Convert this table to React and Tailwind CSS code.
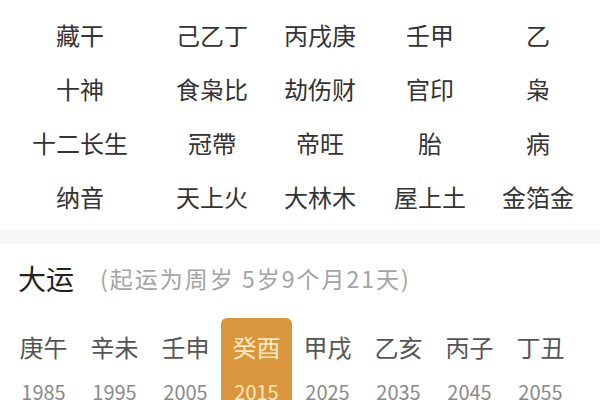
const rows = [
  ["藏干", "己乙丁", "丙戌庚", "壬甲", "乙"],
  ["十神", "食枭比", "劫伤财", "官印", "枭"],
  ["十二长生", "冠帶", "帝旺", "胎", "病"],
  ["纳音", "天上火", "大林木", "屋上土", "金箔金"],
];

const yun = [
  ["庚午", "1985"],
  ["辛未", "1995"],
  ["壬申", "2005"],
  ["癸酉", "2015"],
  ["甲戌", "2025"],
  ["乙亥", "2035"],
  ["丙子", "2045"],
  ["丁丑", "2055"],
];

export default function App() {
  return (
    <div
      className="w-[600px] h-[400px] overflow-hidden bg-white"
      style={{ fontFamily: '"Noto Sans CJK SC", "Noto Sans", sans-serif' }}
    >
      <div className="grid grid-cols-[160px_104px_112px_108px_108px] pt-[8px] pb-[6px] text-[#333]">
        {rows.map((r) =>
          r.map((c, i) => (
            <div key={r[0] + i} className="h-[54px] flex items-center justify-center text-[24px] leading-none">
              {c}
            </div>
          ))
        )}
      </div>
      <div className="h-[14px] bg-[#f7f7f7]" />
      <div className="flex items-center pl-[18px] pt-[20px]">
        <span className="text-[28px] leading-none text-[#222]">大运</span>
        <span className="ml-[26px] text-[23px] tracking-[2px] leading-none text-[#a3a3a3]">(起运为周岁 5岁9个月21天)</span>
      </div>
      <div className="flex pl-[8px] mt-[26px]">
        {yun.map(([g, y]) => {
          const on = g === "癸酉";
          return (
            <div
              key={g}
              className={
                "w-[71px] h-[90px] flex flex-col items-center pt-[17px] " +
                (on ? "bg-[#d9963c] rounded-t-[6px] text-[#fde8c4]" : "")
              }
            >
              <span className={"text-[24px] leading-none " + (on ? "" : "text-[#555]")}>{g}</span>
              <span className={"mt-[23px] text-[20px] leading-none " + (on ? "" : "text-[#8a8a8a]")}>{y}</span>
            </div>
          );
        })}
      </div>
    </div>
  );
}
